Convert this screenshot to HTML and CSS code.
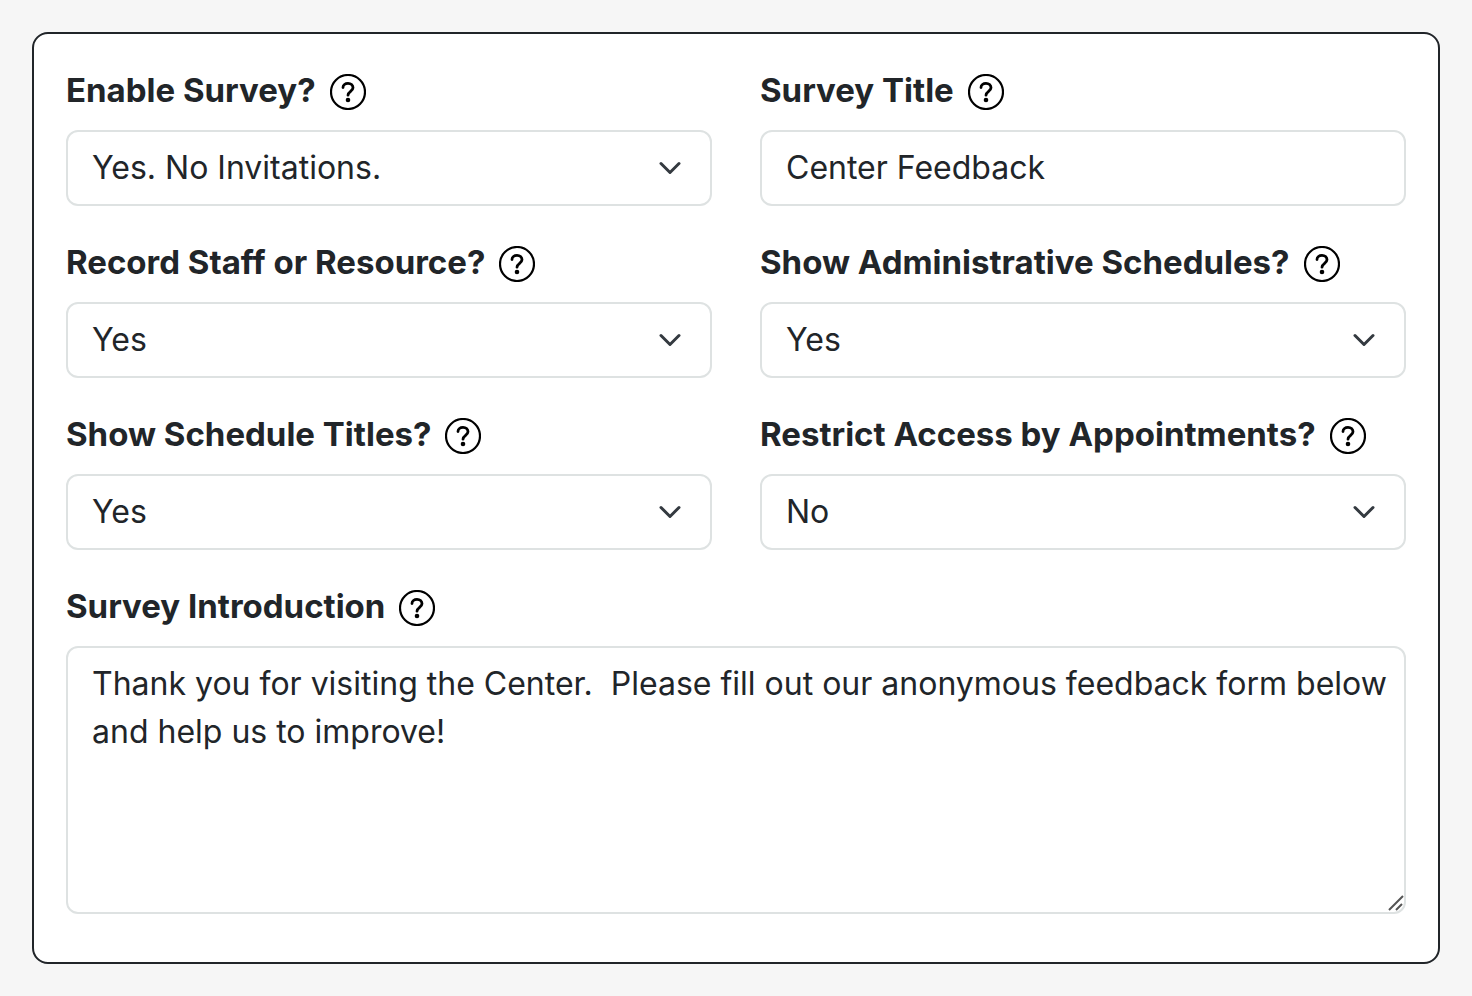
FILE: index.html
```html
<!DOCTYPE html>
<html lang="en">
<head>
<meta charset="utf-8">
<meta name="viewport" content="width=device-width, initial-scale=1">
<title>Survey Settings</title>
<link rel="stylesheet" href="styles.css">
</head>
<body>
<svg class="symbols" aria-hidden="true">
  <symbol id="help" viewBox="0 0 36 36">
    <circle cx="18" cy="18" r="17" fill="none" stroke="currentColor" stroke-width="2.2"/>
    <path d="M13 13.600C13 10.900 15.200 9.400 18 9.400C20.900 9.400 23 11.200 23 13.800C23 17.200 18 17.400 18 21.200" fill="none" stroke="currentColor" stroke-width="2.8" stroke-linecap="round"/>
    <circle cx="18" cy="26" r="2.300" fill="currentColor"/>
  </symbol>
</svg>
<form class="card">
  <div class="field">
    <div class="heading"><label for="enable">Enable Survey?</label><button class="help" type="button" aria-label="Help"><svg><use href="#help"/></svg></button></div>
    <div class="select"><select id="enable" class="control"><option>Yes. No Invitations.</option></select><svg class="chevron" viewBox="0 0 22 14"><path d="M2 2.500L11 11.500L20 2.500"/></svg></div>
  </div>
  <div class="field">
    <div class="heading"><label for="title">Survey Title</label><button class="help" type="button" aria-label="Help"><svg><use href="#help"/></svg></button></div>
    <input id="title" class="control" type="text" value="Center Feedback">
  </div>
  <div class="field">
    <div class="heading"><label for="record">Record Staff or Resource?</label><button class="help" type="button" aria-label="Help"><svg><use href="#help"/></svg></button></div>
    <div class="select"><select id="record" class="control"><option>Yes</option><option>No</option></select><svg class="chevron" viewBox="0 0 22 14"><path d="M2 2.500L11 11.500L20 2.500"/></svg></div>
  </div>
  <div class="field">
    <div class="heading"><label for="admin">Show Administrative Schedules?</label><button class="help" type="button" aria-label="Help"><svg><use href="#help"/></svg></button></div>
    <div class="select"><select id="admin" class="control"><option>Yes</option><option>No</option></select><svg class="chevron" viewBox="0 0 22 14"><path d="M2 2.500L11 11.500L20 2.500"/></svg></div>
  </div>
  <div class="field">
    <div class="heading"><label for="titles">Show Schedule Titles?</label><button class="help" type="button" aria-label="Help"><svg><use href="#help"/></svg></button></div>
    <div class="select"><select id="titles" class="control"><option>Yes</option><option>No</option></select><svg class="chevron" viewBox="0 0 22 14"><path d="M2 2.500L11 11.500L20 2.500"/></svg></div>
  </div>
  <div class="field">
    <div class="heading"><label for="restrict">Restrict Access by Appointments?</label><button class="help" type="button" aria-label="Help"><svg><use href="#help"/></svg></button></div>
    <div class="select"><select id="restrict" class="control"><option>No</option><option>Yes</option></select><svg class="chevron" viewBox="0 0 22 14"><path d="M2 2.500L11 11.500L20 2.500"/></svg></div>
  </div>
  <div class="field wide">
    <div class="heading"><label for="intro">Survey Introduction</label><button class="help" type="button" aria-label="Help"><svg><use href="#help"/></svg></button></div>
    <div class="area"><textarea id="intro" class="control" rows="5">Thank you for visiting the Center.  Please fill out our anonymous feedback form below and help us to improve!</textarea><svg class="grip" viewBox="0 0 16 16"><path d="M1 15L15 1M8 15L14 9"/></svg></div>
  </div>
</form>
</body>
</html>
```
FILE: styles.css
```css
* {
  box-sizing: border-box;
}

body {
  margin: 0;
  padding: 32px;
  background: #f6f6f6;
  color: #212529;
  font: 32px/48px Inter, "Liberation Sans", sans-serif;
}

.symbols {
  position: absolute;
  width: 0;
  height: 0;
}

.card {
  display: grid;
  grid-template-columns: repeat(2, minmax(0, 1fr));
  gap: 32px 48px;
  padding: 32px 32px 48px;
  border: 2px solid #212529;
  border-radius: 16px;
  background: #fff;
}

.field {
  display: flex;
  flex-direction: column;
  gap: 16px;
}

.wide {
  grid-column: 1 / -1;
}

.heading {
  display: flex;
  align-items: flex-start;
  gap: 14px;
  height: 48px;
  font-size: 33px;
  font-weight: 700;
  white-space: nowrap;
}

.help {
  width: 36px;
  height: 36px;
  margin: 8px 0 0;
  padding: 0;
  border: 0;
  border-radius: 50%;
  background: none;
  color: #000;
}

.help svg {
  display: block;
  width: 36px;
  height: 36px;
  overflow: visible;
}

.control {
  display: block;
  width: 100%;
  height: 76px;
  margin: 0;
  padding: 12px 24px;
  border: 2px solid #dee2e2;
  border-radius: 12px;
  background: #fff;
  color: inherit;
  font: inherit;
  appearance: none;
}

input.control {
  padding-top: 10px;
}

.select,
.area {
  position: relative;
}

.chevron {
  position: absolute;
  top: 31px;
  right: 31px;
  width: 22px;
  height: 14px;
  fill: none;
  stroke: #343a40;
  stroke-width: 3;
  stroke-linecap: round;
  stroke-linejoin: round;
  pointer-events: none;
}

textarea.control {
  height: 268px;
  padding-right: 12px;
  resize: none;
}

.grip {
  position: absolute;
  right: 2px;
  bottom: 3px;
  width: 16px;
  height: 16px;
  fill: none;
  stroke: #555;
  stroke-width: 2;
  pointer-events: none;
}
```
